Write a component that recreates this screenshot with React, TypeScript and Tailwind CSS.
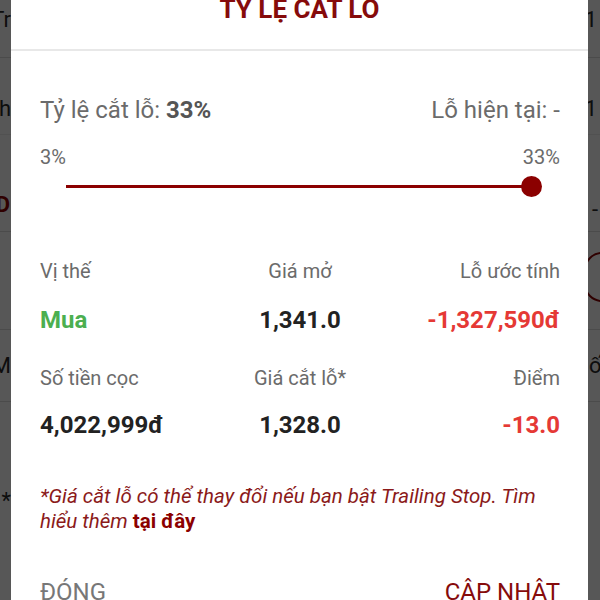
import React from 'react'

const stats = [
  [
    { label: 'Vị thế', value: 'Mua', tone: 'text-[#4caf50]' },
    { label: 'Giá mở', value: '1,341.0', tone: 'text-[#222222]' },
    { label: 'Lỗ ước tính', value: '-1,327,590đ', tone: 'text-[#e53935]' },
  ],
  [
    { label: 'Số tiền cọc', value: '4,022,999đ', tone: 'text-[#222222]' },
    { label: 'Giá cắt lỗ*', value: '1,328.0', tone: 'text-[#222222]' },
    { label: 'Điểm', value: '-13.0', tone: 'text-[#e53935]' },
  ],
]

function Edge({ text, side = 'left', className = '' }: { text: string; side?: 'left' | 'right'; className?: string }) {
  return (
    <div className={`flex w-[11px] overflow-hidden ${side === 'left' ? 'justify-end' : 'justify-start'}`}>
      <span className={`whitespace-nowrap ${className}`}>{text}</span>
    </div>
  )
}

function Backdrop() {
  // page underneath the dialog, only its edges show
  return (
    <div className="flex flex-col text-[22px] leading-[26px] text-[#2a2a2a]">
      <div className="flex h-[58px] items-start justify-between border-b border-[#dcdcdc] pt-[7px]">
        <Edge text="Tr" />
        <span className="pr-[3px]">1</span>
      </div>
      <div className="flex h-[77px] items-start justify-between border-b border-[#ececec] pt-[38px]">
        <Edge text="ch" />
        <span className="pr-[3px]">1</span>
      </div>
      <div className="flex h-[97px] items-start justify-between border-b border-[#dcdcdc] pt-[57px]">
        <Edge text="OD" className="pr-[1px] font-bold text-[#8b0000]" />
        <span className="pr-[2px] pt-[5px]">-</span>
      </div>
      <div className="flex h-[98px] items-start justify-end border-b border-[#dcdcdc] pt-[20px]">
        <div className="mr-[-20px] h-[50px] w-[36px] rounded-full border-2 border-[#8b0000]" />
      </div>
      <div className="flex h-[72px] items-center justify-between border-b border-[#dcdcdc]">
        <Edge text="M" />
        <Edge text="ối" side="right" />
      </div>
      <div className="flex h-[198px] items-start pt-[86px]">
        <Edge text="*" />
      </div>
    </div>
  )
}

export default function App() {
  return (
    <div className="relative h-[600px] w-[600px] overflow-hidden bg-white font-['Roboto',sans-serif]">
      <Backdrop />
      <div className="absolute inset-0 bg-black/[0.66]" />

      <div className="absolute left-[11px] right-[12px] top-[-30px] bg-white">
        <div className="border-b-2 border-[#e8e8e8] pb-[25px] pt-[24px] text-center">
          <h2 className="text-[26px] font-bold leading-[30px] text-[#860b0b]">TỶ LỆ CẮT LỖ</h2>
        </div>

        <div className="pl-[29px] pr-[28px] pt-[45px]">
          <div className="flex justify-between text-[24px] leading-[28px] text-[#6b6b6b]">
            <span>
              Tỷ lệ cắt lỗ: <b className="font-bold text-[#555555]">33%</b>
            </span>
            <span>Lỗ hiện tại: -</span>
          </div>

          <div className="mt-[21px] flex justify-between text-[20px] leading-[24px] text-[#6b6b6b]">
            <span>3%</span>
            <span>33%</span>
          </div>

          <div className="mt-[7px] flex h-[20px] items-center pl-[26px] pr-[18px]">
            <div className="h-[3px] flex-1 bg-[#8b0000]" />
            <div className="ml-[-10px] h-[21px] w-[21px] rounded-full bg-[#8b0000]" />
          </div>

          {stats.map((row, i) => (
            <div key={i} className={i === 0 ? 'mt-[63px]' : 'mt-[32px]'}>
              <div className="grid grid-cols-3 text-[20px] leading-[24px] text-[#6b6b6b]">
                {row.map((c, j) => (
                  <span key={j} className={j === 0 ? 'text-left' : j === 1 ? 'text-center' : 'text-right'}>
                    {c.label}
                  </span>
                ))}
              </div>
              <div className={`grid grid-cols-3 text-[24px] font-bold leading-[28px] ${i === 0 ? 'mt-[23px]' : 'mt-[21px]'}`}>
                {row.map((c, j) => (
                  <span
                    key={j}
                    className={`${c.tone} ${j === 0 ? 'text-left' : j === 1 ? 'text-center' : 'text-right'}`}
                  >
                    {c.value}
                  </span>
                ))}
              </div>
            </div>
          ))}

          <p className="mt-[45px] text-[20.5px] italic leading-[25px] text-[#8b1a1a]">
            *Giá cắt lỗ có thể thay đổi nếu bạn bật Trailing Stop. Tìm hiểu thêm{' '}
            <b className="font-bold not-italic text-[#8b0000]">tại đây</b>
          </p>

          <div className="mt-[44px] flex justify-between pb-[20px] text-[24px] leading-[28px]">
            <button className="text-[#777777]">ĐÓNG</button>
            <button className="text-[#860b0b]">CẬP NHẬT</button>
          </div>
        </div>
      </div>
    </div>
  )
}
